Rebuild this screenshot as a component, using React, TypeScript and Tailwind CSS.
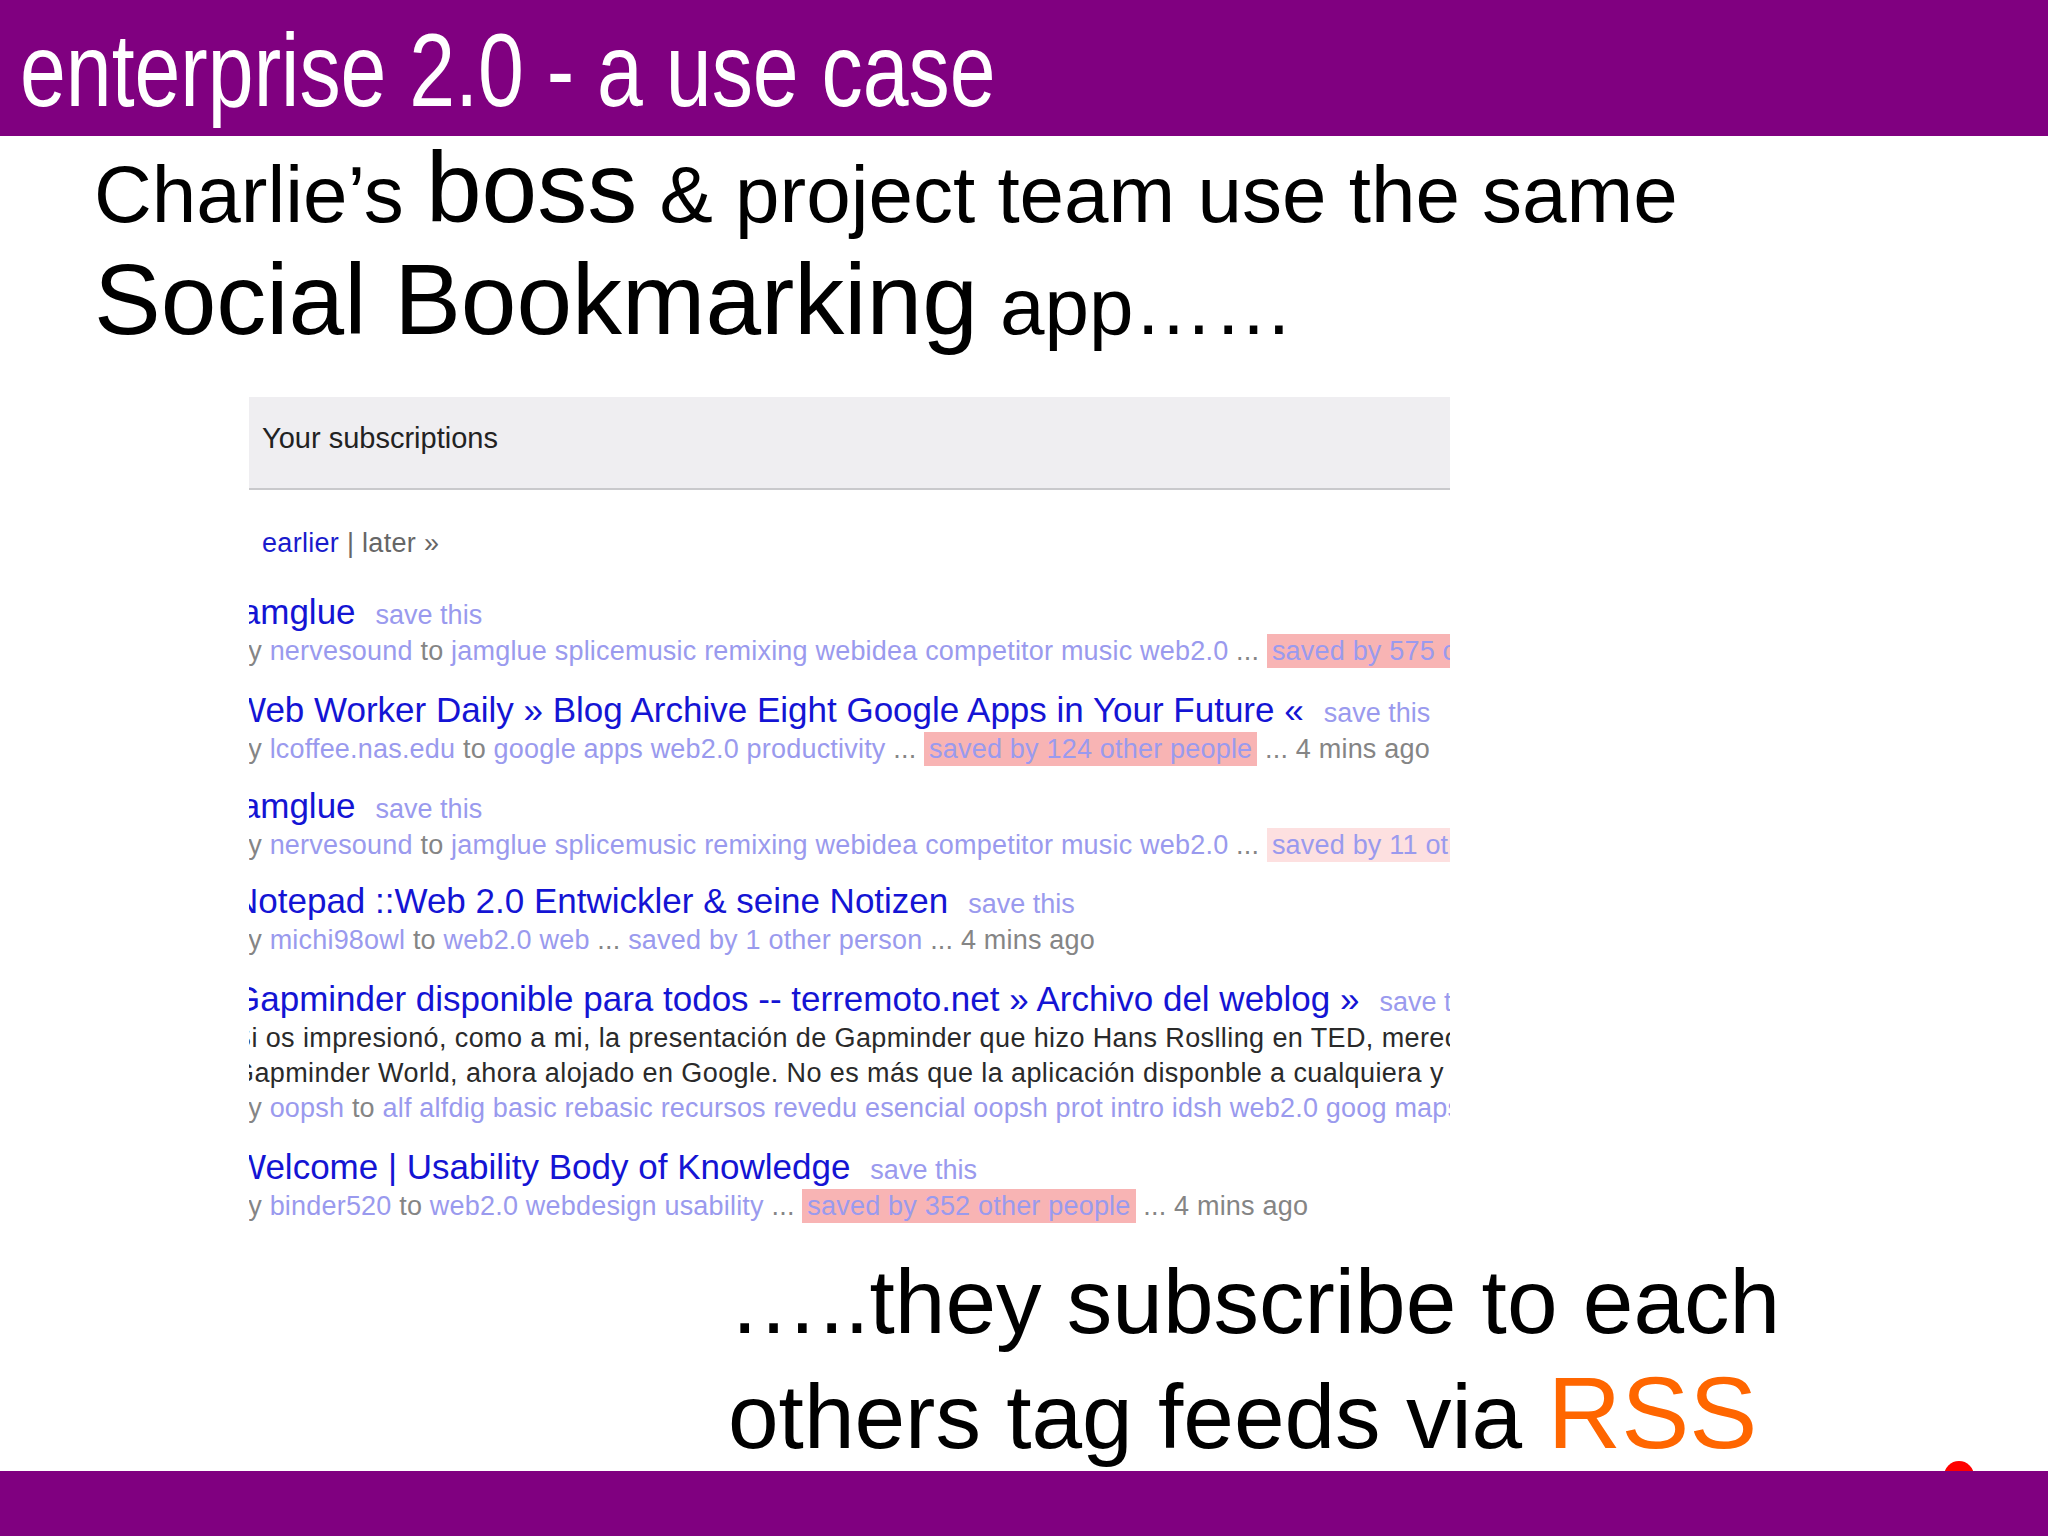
type Seg = { t: string; k: 'g' | 't' | 'h' | 'l' };

type Entry = {
  title: string;
  mt: string;
  desc?: string[];
  meta: Seg[];
};

const entries: Entry[] = [
  {
    title: 'jamglue',
    mt: 'mt-[36px]',
    meta: [
      { t: 'by ', k: 'g' },
      { t: 'nervesound', k: 't' },
      { t: ' to ', k: 'g' },
      { t: 'jamglue splicemusic remixing webidea competitor music web2.0', k: 't' },
      { t: ' ... ', k: 'g' },
      { t: 'saved by 575 other people', k: 'h' },
      { t: ' ... 4 mins ago', k: 'g' },
    ],
  },
  {
    title: 'Web Worker Daily » Blog Archive Eight Google Apps in Your Future «',
    mt: 'mt-[22px]',
    meta: [
      { t: 'by ', k: 'g' },
      { t: 'lcoffee.nas.edu', k: 't' },
      { t: ' to ', k: 'g' },
      { t: 'google apps web2.0 productivity', k: 't' },
      { t: ' ... ', k: 'g' },
      { t: 'saved by 124 other people', k: 'h' },
      { t: ' ... 4 mins ago', k: 'g' },
    ],
  },
  {
    title: 'jamglue',
    mt: 'mt-[20px]',
    meta: [
      { t: 'by ', k: 'g' },
      { t: 'nervesound', k: 't' },
      { t: ' to ', k: 'g' },
      { t: 'jamglue splicemusic remixing webidea competitor music web2.0', k: 't' },
      { t: ' ... ', k: 'g' },
      { t: 'saved by 11 other people', k: 'l' },
      { t: ' ... 4 mins ago', k: 'g' },
    ],
  },
  {
    title: 'Notepad ::Web 2.0 Entwickler & seine Notizen',
    mt: 'mt-[19px]',
    meta: [
      { t: 'by ', k: 'g' },
      { t: 'michi98owl', k: 't' },
      { t: ' to ', k: 'g' },
      { t: 'web2.0 web', k: 't' },
      { t: ' ... ', k: 'g' },
      { t: 'saved by 1 other person', k: 't' },
      { t: ' ... 4 mins ago', k: 'g' },
    ],
  },
  {
    title: 'Gapminder disponible para todos -- terremoto.net » Archivo del weblog »',
    mt: 'mt-[22px]',
    desc: [
      'Si os impresionó, como a mi, la presentación de Gapminder que hizo Hans Roslling en TED, merecerá la pena',
      'Gapminder World, ahora alojado en Google. No es más que la aplicación disponble a cualquiera y para todos',
    ],
    meta: [
      { t: 'by ', k: 'g' },
      { t: 'oopsh', k: 't' },
      { t: ' to ', k: 'g' },
      { t: 'alf alfdig basic rebasic recursos revedu esencial oopsh prot intro idsh web2.0 goog maps', k: 't' },
      { t: ' ... ', k: 'g' },
    ],
  },
  {
    title: 'Welcome | Usability Body of Knowledge',
    mt: 'mt-[22px]',
    meta: [
      { t: 'by ', k: 'g' },
      { t: 'binder520', k: 't' },
      { t: ' to ', k: 'g' },
      { t: 'web2.0 webdesign usability', k: 't' },
      { t: ' ... ', k: 'g' },
      { t: 'saved by 352 other people', k: 'h' },
      { t: ' ... 4 mins ago', k: 'g' },
    ],
  },
];

const segClass = {
  g: 'text-[#858585]',
  t: 'text-[#9a9aee]',
  h: 'bg-[#f8b4b4] px-[5px] py-[2px] text-[#9a9aee]',
  l: 'bg-[#fde0e0] px-[5px] py-[2px] text-[#9a9aee]',
};

function Subscriptions() {
  return (
    <div className="ml-[249px] mt-[48px] w-[1201px] overflow-hidden whitespace-nowrap">
      <div className="h-[93px] border-b-2 border-[#c9c9cc] bg-[#efeef1] pl-[13px] pt-[27px] text-[29px] leading-none text-[#222]">
        Your subscriptions
      </div>
      <div className="mt-[40px] pl-[13px] text-[27px] leading-none tracking-[0.3px] text-[#666]">
        <span className="text-[#1a1acc]">earlier</span> | later »
      </div>
      <div className="-ml-[16px]">
        {entries.map((e, i) => (
          <div key={i} className={e.mt}>
            <div className="flex items-baseline text-[35px] leading-[38px] text-[#1414d4]">
              <span>{e.title}</span>
              <span className="ml-[20px] text-[27px] text-[#9a9aee]">save this</span>
            </div>
            {e.desc?.map((d) => (
              <div key={d} className="text-[27px] leading-[35px] tracking-[0.4px] text-[#2a2a2a]">
                {d}
              </div>
            ))}
            <div className="text-[27px] leading-[35px] tracking-[0.2px]">
              {e.meta.map((s, j) => (
                <span key={j} className={segClass[s.k]}>
                  {s.t}
                </span>
              ))}
            </div>
          </div>
        ))}
      </div>
    </div>
  );
}

export default function App() {
  return (
    <div className="relative flex h-[1536px] w-[2048px] flex-col overflow-hidden bg-white font-['Liberation_Sans',Arial,sans-serif] text-black">
      <header className="h-[136px] shrink-0 bg-[#800080] pl-[20px] pt-[19px]">
        <h1 className="origin-left scale-x-[0.8] whitespace-nowrap text-[103px] leading-none text-white">
          enterprise 2.0 - a use case
        </h1>
      </header>

      <div className="mt-[1px] whitespace-nowrap pl-[94px] text-[80px] leading-none">
        Charlie’s <span className="text-[100px]">boss</span> &amp; project team use the same
      </div>
      <div className="mt-[12px] whitespace-nowrap pl-[94px] text-[80px] leading-none">
        <span className="text-[100px]">Social Bookmarking</span> app……
      </div>

      <Subscriptions />

      <div className="mt-[32px] whitespace-nowrap pl-[728px] text-[91px] leading-none">
        …..they subscribe to each
      </div>
      <div className="mt-[15px] whitespace-nowrap pl-[728px] text-[91px] leading-none">
        others tag feeds via <span className="text-[102px] text-[#ff6600]">RSS</span>
      </div>

      <div className="absolute left-[1944px] top-[1461px] h-[30px] w-[30px] rounded-full bg-[#ff0000]" />
      <footer className="relative z-10 mt-auto h-[65px] shrink-0 bg-[#800080]" />
    </div>
  );
}
